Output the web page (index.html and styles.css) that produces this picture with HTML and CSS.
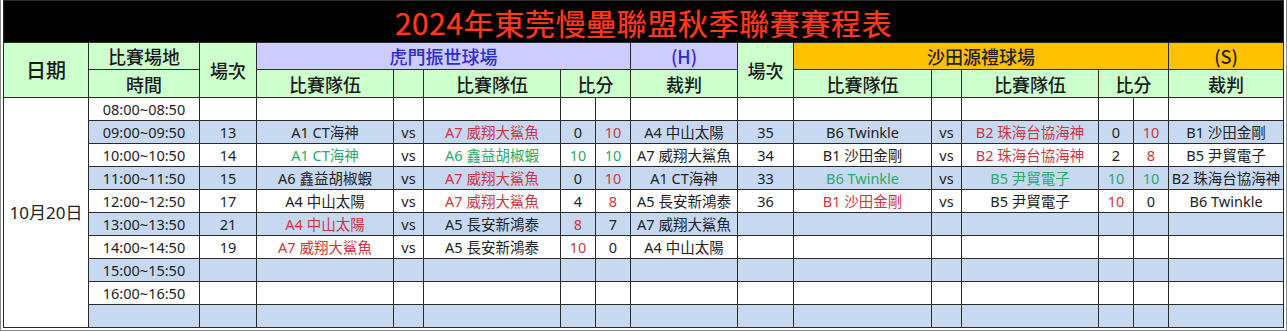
FILE: index.html
```html
<!DOCTYPE html>
<html lang="zh-Hant">
<head>
<meta charset="utf-8">
<title>2024年東莞慢壘聯盟秋季聯賽賽程表</title>
<link rel="stylesheet" href="styles.css">
</head>
<body>
<div class="sheet">
<table class="sched">
<colgroup>
<col class="c-date"><col class="c-time"><col class="c-no">
<col class="c-team"><col class="c-vs"><col class="c-team"><col class="c-sc"><col class="c-sc"><col class="c-ref">
<col class="c-no2">
<col class="c-team2"><col class="c-vs"><col class="c-team"><col class="c-sc"><col class="c-sc"><col class="c-ref2">
</colgroup>
<tr class="r-title"><td colspan="16" class="title">2024年東莞慢壘聯盟秋季聯賽賽程表</td></tr>
<tr class="r-h1">
<td rowspan="2" class="hg big">日期</td>
<td class="hg">比賽場地</td>
<td rowspan="2" class="hg">場次</td>
<td colspan="5" class="hp">虎門振世球場</td>
<td class="hp">(H)</td>
<td rowspan="2" class="hg">場次</td>
<td colspan="5" class="ho">沙田源禮球場</td>
<td class="ho">(S)</td>
</tr>
<tr class="r-h2">
<td class="hg">時間</td>
<td class="hg">比賽隊伍</td><td class="hg"></td><td class="hg">比賽隊伍</td><td colspan="2" class="hg">比分</td><td class="hg">裁判</td>
<td class="hg">比賽隊伍</td><td class="hg"></td><td class="hg">比賽隊伍</td><td colspan="2" class="hg">比分</td><td class="hg">裁判</td>
</tr>
<tr class="d">
<td rowspan="10" class="date">10月20日</td>
<td>08:00~08:50</td><td></td><td></td><td></td><td></td><td></td><td></td><td></td><td></td><td></td><td></td><td></td><td></td><td></td><td></td>
</tr>
<tr class="d b">
<td>09:00~09:50</td><td>13</td><td>A1 CT海神</td><td>vs</td><td class="red">A7 威翔大鯊魚</td><td>0</td><td class="red">10</td><td>A4 中山太陽</td>
<td>35</td><td>B6 Twinkle</td><td>vs</td><td class="red">B2 珠海台協海神</td><td>0</td><td class="red">10</td><td>B1 沙田金剛</td>
</tr>
<tr class="d">
<td>10:00~10:50</td><td>14</td><td class="grn">A1 CT海神</td><td>vs</td><td class="grn">A6 鑫益胡椒蝦</td><td class="grn">10</td><td class="grn">10</td><td>A7 威翔大鯊魚</td>
<td>34</td><td>B1 沙田金剛</td><td>vs</td><td class="red">B2 珠海台協海神</td><td>2</td><td class="red">8</td><td>B5 尹貿電子</td>
</tr>
<tr class="d b">
<td>11:00~11:50</td><td>15</td><td>A6 鑫益胡椒蝦</td><td>vs</td><td class="red">A7 威翔大鯊魚</td><td>0</td><td class="red">10</td><td>A1 CT海神</td>
<td>33</td><td class="grn">B6 Twinkle</td><td>vs</td><td class="grn">B5 尹貿電子</td><td class="grn">10</td><td class="grn">10</td><td>B2 珠海台協海神</td>
</tr>
<tr class="d">
<td>12:00~12:50</td><td>17</td><td>A4 中山太陽</td><td>vs</td><td class="red">A7 威翔大鯊魚</td><td>4</td><td class="red">8</td><td>A5 長安新鴻泰</td>
<td>36</td><td class="red">B1 沙田金剛</td><td>vs</td><td>B5 尹貿電子</td><td class="red">10</td><td>0</td><td>B6 Twinkle</td>
</tr>
<tr class="d b">
<td>13:00~13:50</td><td>21</td><td class="red">A4 中山太陽</td><td>vs</td><td>A5 長安新鴻泰</td><td class="red">8</td><td>7</td><td>A7 威翔大鯊魚</td>
<td></td><td></td><td></td><td></td><td></td><td></td><td></td>
</tr>
<tr class="d">
<td>14:00~14:50</td><td>19</td><td class="red">A7 威翔大鯊魚</td><td>vs</td><td>A5 長安新鴻泰</td><td class="red">10</td><td>0</td><td>A4 中山太陽</td>
<td></td><td></td><td></td><td></td><td></td><td></td><td></td>
</tr>
<tr class="d b">
<td>15:00~15:50</td><td></td><td></td><td></td><td></td><td></td><td></td><td></td><td></td><td></td><td></td><td></td><td></td><td></td><td></td>
</tr>
<tr class="d">
<td>16:00~16:50</td><td></td><td></td><td></td><td></td><td></td><td></td><td></td><td></td><td></td><td></td><td></td><td></td><td></td><td></td>
</tr>
<tr class="d b">
<td></td><td></td><td></td><td></td><td></td><td></td><td></td><td></td><td></td><td></td><td></td><td></td><td></td><td></td><td></td>
</tr>
</table>
</div>
</body>
</html>
```
FILE: styles.css
```css
html, body {
  margin: 0;
  padding: 0;
  background: #ffffff;
}
.sheet {
  width: 1287px;
  height: 331px;
  box-sizing: border-box;
  border: 1px solid #8a8a8a;
  border-top: none;
  padding: 0 3px 2px 2px;
  overflow: hidden;
}
.sched {
  width: 1280px;
  table-layout: fixed;
  border-collapse: collapse;
  font-family: "Noto Sans", "Noto Sans CJK TC", sans-serif;
  font-size: 14.5px;
  color: #222222;
  border: 1px solid #222222;
}
.sched td {
  border: 1px solid #2a2a2a;
  padding: 0;
  text-align: center;
  vertical-align: middle;
  line-height: 18px;
  white-space: nowrap;
  overflow: hidden;
}
.c-date { width: 85px; }
.c-time { width: 111px; }
.c-no { width: 57px; }
.c-team { width: 137px; }
.c-vs { width: 30px; }
.c-sc { width: 35px; }
.c-ref { width: 107px; }
.c-no2 { width: 56px; }
.c-team2 { width: 138px; }
.c-ref2 { width: 115px; }

.r-title { height: 42px; }
.sched td.title {
  background: #000000;
  color: #ff3a1c;
  font-family: "Noto Sans CJK TC", sans-serif;
  font-size: 30px;
  line-height: 40px;
  letter-spacing: 0.6px;
  overflow: visible;
  text-shadow: 0 0 1px #b01400;
}
.r-h1 { height: 27px; }
.r-h2 { height: 28px; }
.hg, .hp, .ho {
  font-family: "Noto Sans CJK TC", sans-serif;
  font-size: 18px;
  line-height: 22px;
  color: #1a1a1a;
  font-weight: 500;
}
.hg { background: #ccffcc; }
.hp { background: #ccccff; color: #2d2dc8; }
.ho { background: #ffc000; color: #222222; }
.big { font-size: 20px; }

.d { height: 23px; }
.d td { background: #ffffff; }
.d.b td { background: #c6d9f1; }
.d td.date {
  background: #ffffff;
  font-size: 17px;
  font-family: "Noto Sans", "Noto Sans CJK TC", sans-serif;
}
.d td.red { color: #cf3540; }
.d td.grn { color: #2ea868; }
```
